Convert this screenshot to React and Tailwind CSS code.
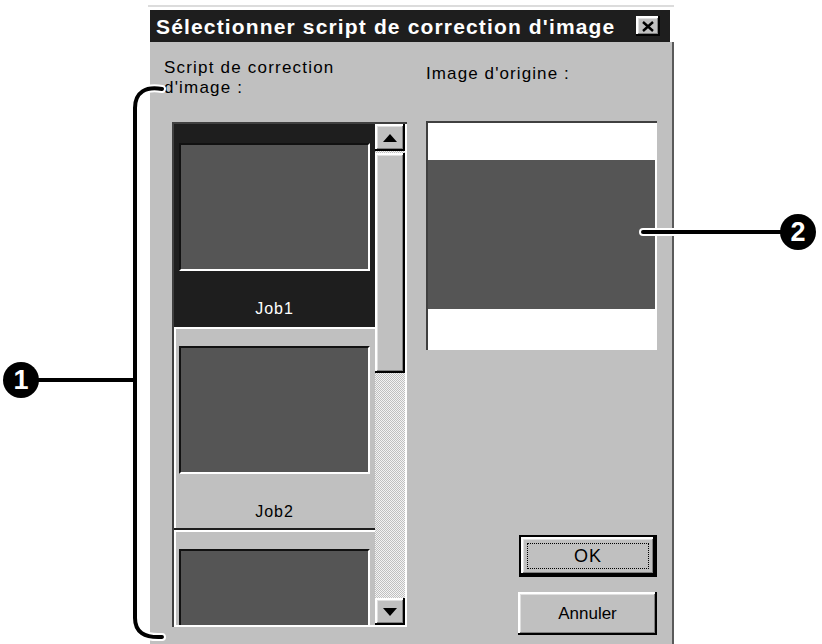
const raised =
  "shadow-[inset_-2px_-2px_0_#000,inset_2px_2px_0_#fff,inset_-3px_-3px_0_#808080,inset_3px_3px_0_#dfdfdf]";
const sunken =
  "shadow-[inset_2px_2px_0_#404040,inset_-2px_-2px_0_#fff]";

function Thumb() {
  return (
    <div className="w-[191px] h-[128px] bg-[#555555] border-t-2 border-l-2 border-[#111] border-b-2 border-r-2 border-b-white border-r-white" />
  );
}

function JobItem({ name, selected }) {
  return (
    <div
      className={
        "h-[203px] shrink-0 pt-[19px] pl-[5px] border-b-2 border-[#1e1e1e] " +
        (selected
          ? "bg-[#1e1e1e] text-white"
          : "bg-[#c0c0c0] text-black shadow-[inset_2px_2px_0_#fff]")
      }
    >
      <Thumb />
      {name && (
        <div className="mt-[28px] w-[191px] text-center text-[16px] leading-[20px] tracking-[1px]">
          {name}
        </div>
      )}
    </div>
  );
}

function Arrow({ down }) {
  return (
    <svg width="14" height="8" viewBox="0 0 14 8">
      <polygon points={down ? "0,0 14,0 7,8" : "7,0 14,8 0,8"} fill="#000" />
    </svg>
  );
}

function Scrollbar() {
  return (
    <div className="w-[30px] flex flex-col bg-[repeating-conic-gradient(#c0c0c0_0%_25%,#f4f4f4_0%_50%)] bg-[length:2px_2px]">
      <div className={"h-[27px] bg-[#c0c0c0] flex items-center justify-center " + raised}>
        <Arrow />
      </div>
      <div className={"mt-[2px] h-[220px] bg-[#c0c0c0] " + raised} />
      <div className="flex-1" />
      <div className={"h-[27px] bg-[#c0c0c0] flex items-center justify-center " + raised}>
        <Arrow down />
      </div>
    </div>
  );
}

function Button({ label, isDefault }) {
  if (isDefault) {
    return (
      <div className="w-[138px] h-[42px] border-2 border-black">
        <div className={"h-full bg-[#c0c0c0] p-[6px] " + raised}>
          <div className="h-full border border-dotted border-black flex items-center justify-center text-[18px] tracking-[1px]">
            {label}
          </div>
        </div>
      </div>
    );
  }
  return (
    <div
      className={
        "w-[139px] h-[43px] bg-[#c0c0c0] flex items-center justify-center text-[17px] " + raised
      }
    >
      {label}
    </div>
  );
}

export default function App() {
  return (
    <div className="relative w-[822px] h-[644px] overflow-hidden bg-white font-['Liberation_Sans',Arial,sans-serif] text-black">
      <div className="ml-[148px] mt-[5px] w-[526px] h-[645px] flex flex-col border-t-2 border-[#dcdcdc]">
        <div className="mt-[3px] ml-[2px] mr-[4px] h-[32px] shrink-0 bg-[#1e1e1e] flex items-center justify-between pl-[6px] pr-[10px]">
          <span className="text-white font-bold text-[21px] tracking-[1.15px] leading-none">
            Sélectionner script de correction d'image
          </span>
          <div className={"w-[24px] h-[20px] bg-[#c0c0c0] flex items-center justify-center " + raised}>
            <svg width="12" height="11" viewBox="0 0 12 11">
              <path d="M1 1 L11 10 M11 1 L1 10" stroke="#000" strokeWidth="2.4" />
            </svg>
          </div>
        </div>
        <div className="flex-1 flex bg-[#c0c0c0] pl-[14px] pt-[16px] gap-[18px] border-r-2 border-[#5a5a5a] ml-[2px]">
          <div className="w-[244px] flex flex-col">
            <div className="text-[17px] leading-[20px] tracking-[1.2px]">
              Script de correction
              <br />
              d'image :
            </div>
            <div className={"ml-[8px] mt-[24px] w-[235px] h-[505px] p-[2px] flex " + sunken}>
              <div className="flex-1 flex flex-col overflow-hidden">
                <JobItem name="Job1" selected />
                <JobItem name="Job2" />
                <JobItem />
              </div>
              <Scrollbar />
            </div>
          </div>
          <div className="w-[231px] flex flex-col">
            <div className="mt-[6px] text-[17px] leading-[20px] tracking-[1.1px]">
              Image d'origine :
            </div>
            <div className={"mt-[37px] h-[229px] bg-white p-[2px] flex flex-col " + sunken}>
              <div className="h-[37px]" />
              <div className="h-[149px] bg-[#555555]" />
            </div>
            <div className="mt-[185px] flex flex-col items-end gap-[15px]">
              <Button label="OK" isDefault />
              <Button label="Annuler" />
            </div>
          </div>
        </div>
      </div>

      <svg className="absolute left-0 top-0 pointer-events-none" width="822" height="644">
        <path
          d="M162 89 C146 86 135 92 135 108 L135 618 C135 632 144 638 162 637"
          fill="none"
          stroke="#fff"
          strokeWidth="8"
          strokeLinecap="round"
        />
        <path
          d="M162 89 C146 86 135 92 135 108 L135 618 C135 632 144 638 162 637"
          fill="none"
          stroke="#000"
          strokeWidth="4"
          strokeLinecap="round"
        />
        <line x1="38" y1="380" x2="135" y2="380" stroke="#000" strokeWidth="4" />
        <line x1="643" y1="232" x2="782" y2="232" stroke="#fff" strokeWidth="8" strokeLinecap="round" />
        <line x1="643" y1="232" x2="782" y2="232" stroke="#000" strokeWidth="4" strokeLinecap="round" />
      </svg>
      <div className="absolute left-[3px] top-[362px] w-[36px] h-[36px] rounded-full bg-black text-white font-bold text-[27px] flex items-center justify-center leading-none">
        1
      </div>
      <div className="absolute left-[780px] top-[214px] w-[36px] h-[36px] rounded-full bg-black text-white font-bold text-[27px] flex items-center justify-center leading-none">
        2
      </div>
    </div>
  );
}
